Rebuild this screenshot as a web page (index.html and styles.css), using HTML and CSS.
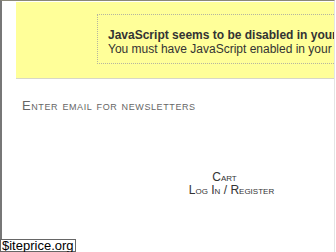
FILE: index.html
```html
<!DOCTYPE html>
<html>
<head>
    <title>Store</title>
    <link rel="stylesheet" href="styles.css">
</head>
<body>
    <div class="page">
        <div class="noscript">
            <div class="noscript-inner">
                <p class="noscript-title">JavaScript seems to be disabled in your browser.</p>
                <p>You must have JavaScript enabled in your browser to utilize the functionality of this website.</p>
            </div>
        </div>

        <div class="newsletter">Enter email for newsletters</div>

        <ul class="links">
            <li class="cart">Cart</li>
            <li>Log In / Register</li>
        </ul>
    </div>
    <div class="stamp">$iteprice.org</div>
</body>
</html>
```

FILE: styles.css
```css
html, body {
    margin: 0;
    height: 100%;
    overflow: hidden;
    background-color: #fff;
    font-family: "Liberation Sans", Arial, sans-serif;
}

.page {
    height: 100%;
    border-top: 1px solid #8a8778;
    border-left: 2px solid #777;
    border-right: 1px solid #e4e4e4;
    margin-right: 1px;
    padding-top: 1px;
    box-sizing: border-box;
}

.noscript {
    margin-left: 14px;
    height: 76px;
    padding: 12px 0 0 81px;
    box-sizing: border-box;
    background-color: #ffff99;
    box-shadow: 0 1px 0 #d8d8c8;
    overflow: hidden;
    white-space: nowrap;
}

.noscript-inner {
    border: 1px dotted #b5b5a0;
    border-right: 0;
    height: 50px;
    padding: 13px 0 0 10px;
    box-sizing: border-box;
    font-size: 12px;
    line-height: 14px;
    color: #333;
}

.noscript-inner p {
    margin: 0;
}

.noscript-title {
    font-weight: bold;
}

.newsletter {
    margin: 20px 0 0 20px;
    font-size: 13px;
    letter-spacing: 0.6px;
    font-variant: small-caps;
    color: #666;
}

.links {
    list-style: none;
    margin: 58px 0 0 0;
    padding: 0 0 0 127px;
    text-align: center;
    font-size: 12px;
    line-height: 13px;
    font-variant: small-caps;
    color: #333;
}

.links .cart {
    padding-right: 14px;
}

.stamp {
    position: absolute;
    left: 0;
    bottom: 0;
    padding: 0 1px;
    border: 1px solid #666;
    background-color: #fff;
    font-size: 13px;
    line-height: 11px;
    color: #000;
}
```
